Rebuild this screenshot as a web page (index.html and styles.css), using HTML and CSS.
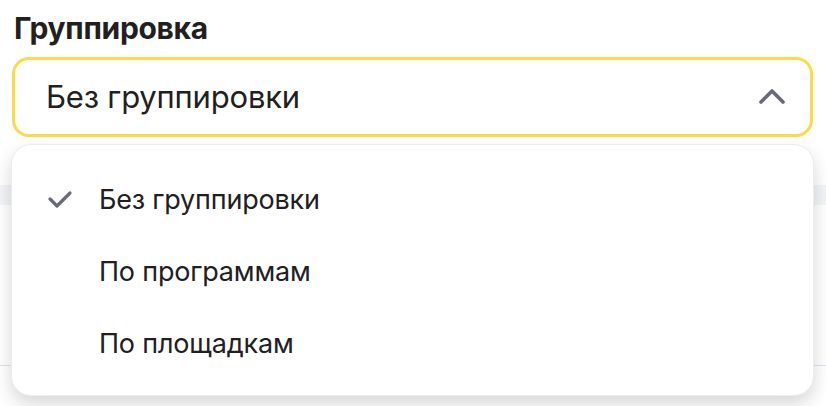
FILE: index.html
```html
<!DOCTYPE html>
<html lang="ru">
<head>
    <meta charset="UTF-8">
    <title>Группировка</title>
    <link rel="stylesheet" href="styles.css">
</head>
<body>
    <div class="container">
        <h2 class="label">Группировка</h2>
        <div class="field">
            <div class="select">
                <span class="select-value">Без группировки</span>
                <svg class="chevron" width="28" height="18" viewBox="0 0 28 18">
                    <path d="M3 15 L14 4 L25 15" fill="none" stroke="#676a7d" stroke-width="3.6" stroke-linecap="round" stroke-linejoin="round"/>
                </svg>
            </div>

            <!-- таблица под меню -->
            <div class="table">
                <div class="table-head"></div>
                <div class="table-row"></div>
            </div>

            <ul class="menu">
                <li class="menu-item selected">
                    <svg class="check" width="26" height="20" viewBox="0 0 26 20">
                        <path d="M3 10 L10 17 L23 4" fill="none" stroke="#676a7d" stroke-width="3.2" stroke-linecap="round" stroke-linejoin="round"/>
                    </svg>
                    Без группировки
                </li>
                <li class="menu-item">По программам</li>
                <li class="menu-item">По площадкам</li>
            </ul>
        </div>
    </div>
</body>
</html>
```

FILE: styles.css
```css
body {
    margin: 0;
    background-color: #fff;
    font-family: Inter, "Noto Sans", Arial, sans-serif;
    color: #21201f;
}
.container {
    padding: 0 13px 0 11px;
    min-height: 406px;
    box-sizing: border-box;
}
.label {
    margin: 0;
    padding: 9px 0 0 3px;
    height: 57px;
    box-sizing: border-box;
    font-size: 30px;
    font-weight: 700;
    line-height: 38px;
    letter-spacing: -0.3px;
}
.field {
    position: relative;
}
.select {
    margin: 0 0 0 1px;
    height: 80px;
    box-sizing: border-box;
    border: 3px solid #fed94a;
    border-radius: 17px;
    display: flex;
    align-items: center;
    justify-content: space-between;
    padding: 0 24px 0 31px;
}
.select-value {
    font-size: 31px;
    line-height: 38px;
    letter-spacing: -0.2px;
}
.chevron {
    margin-top: -2px;
}
.table {
    margin: 0 -13px 0 -11px;
}
.table-head {
    margin-top: 48px;
    height: 20px;
    background-color: #f3f4f7;
}
.table-row {
    height: 160px;
    border-bottom: 1px solid #dfe2ee;
}
.menu {
    position: absolute;
    top: 87px;
    left: 0;
    right: -1px;
    margin: 0;
    padding: 18px 0 16px;
    list-style: none;
    background-color: #fff;
    border: 1px solid #ececec;
    border-radius: 20px;
    box-shadow: 0 8px 18px rgba(0, 0, 0, 0.16);
}
.menu-item {
    height: 72px;
    display: flex;
    align-items: center;
    padding-left: 87px;
    font-size: 27px;
    letter-spacing: -0.2px;
}
.menu-item.selected {
    padding-left: 35px;
}
.check {
    margin-right: 26px;
}
```
